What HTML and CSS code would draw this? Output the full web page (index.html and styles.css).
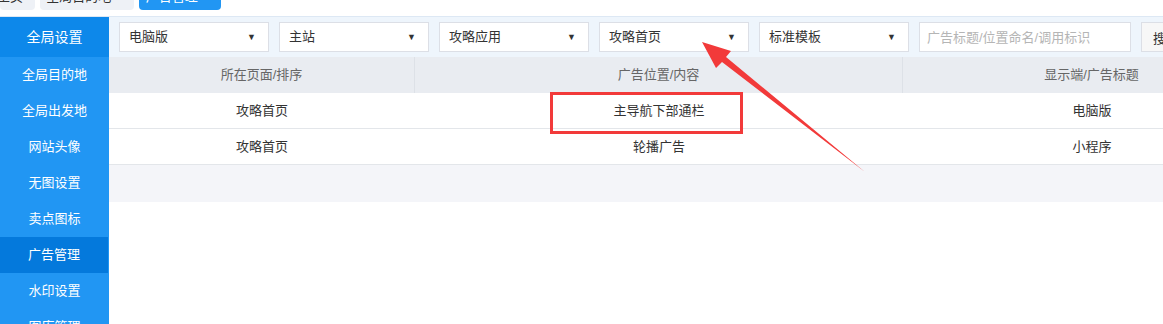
FILE: index.html
```html
<!DOCTYPE html>
<html lang="zh-CN">
<head>
    <meta charset="UTF-8">
    <title>广告管理</title>
    <link rel="stylesheet" href="styles.css">
</head>
<body>
    <!-- Tab strip -->
    <div class="tabs">
        <div class="tab home">主页</div>
        <div class="tab wide">全局目的地 <span class="close">×</span></div>
        <div class="tab active">广告管理 <span class="close">×</span></div>
    </div>

    <div class="layout">
        <!-- Sidebar -->
        <div class="sidebar">
            <div class="side-title">全局设置</div>
            <div class="side-item">全局目的地</div>
            <div class="side-item">全局出发地</div>
            <div class="side-item">网站头像</div>
            <div class="side-item">无图设置</div>
            <div class="side-item">卖点图标</div>
            <div class="side-item active">广告管理</div>
            <div class="side-item">水印设置</div>
            <div class="side-item">图库管理</div>
        </div>

        <!-- Main content -->
        <div class="main">
            <div class="toolbar">
                <div class="select">电脑版<span class="caret">▼</span></div>
                <div class="select">主站<span class="caret">▼</span></div>
                <div class="select">攻略应用<span class="caret">▼</span></div>
                <div class="select">攻略首页<span class="caret">▼</span></div>
                <div class="select">标准模板<span class="caret">▼</span></div>
                <input class="search" type="text" placeholder="广告标题/位置命名/调用标识">
                <button class="btn">搜索</button>
            </div>

            <div class="table">
                <div class="row head">
                    <div class="cell c1">所在页面/排序</div>
                    <div class="cell c2">广告位置/内容</div>
                    <div class="cell c3">显示端/广告标题</div>
                </div>
                <div class="row">
                    <div class="cell c1">攻略首页</div>
                    <div class="cell c2">主导航下部通栏</div>
                    <div class="cell c3">电脑版</div>
                </div>
                <div class="row">
                    <div class="cell c1">攻略首页</div>
                    <div class="cell c2">轮播广告</div>
                    <div class="cell c3">小程序</div>
                </div>
                <div class="table-foot"></div>
            </div>
        </div>
    </div>

    <!-- Annotation drawn over the screenshot -->
    <svg class="annotation" width="1163" height="324" viewBox="0 0 1163 324">
        <rect x="551.5" y="93.5" width="190" height="39" fill="none" stroke="#f23a3a" stroke-width="3"/>
        <polygon points="702,42 731,51 726,57 865,172 722,62 716,68" fill="#f23a3a"/>
    </svg>
</body>
</html>
```

FILE: styles.css
```css
body {
    margin: 0;
    font-family: "Liberation Sans", "Noto Sans CJK SC", sans-serif;
    font-size: 13px;
    color: #333;
    background: #fff;
    overflow: hidden;
}

/* Tab strip (scrolled so only the bottom of the tabs shows) */
.tabs {
    height: 17px;
    display: flex;
    align-items: flex-end;
    gap: 5px;
    padding-bottom: 6px;
    box-sizing: border-box;
    border-bottom: 1px solid #dde8f4;
    overflow: hidden;
}

.tab {
    flex-shrink: 0;
    height: 26px;
    line-height: 26px;
    text-align: center;
    background: #eef1f6;
    border-radius: 0 0 4px 4px;
    color: #333;
    white-space: nowrap;
    width: 82px;
}

.tab.home {
    width: 35px;
    text-align: left;
    text-indent: -3px;
}

.tab.wide {
    width: 94px;
}

.tab .close {
    color: #999;
    margin-left: 6px;
    font-size: 12px;
}

.tab.active {
    background: #2196f3;
    color: #fff;
}

.tab.active .close {
    color: #fff;
}

/* Layout */
.layout {
    display: flex;
    height: 307px;
}

.sidebar {
    width: 109px;
    flex-shrink: 0;
    background: #2196f3;
    color: #fff;
    overflow: hidden;
}

.side-title {
    height: 40px;
    line-height: 40px;
    text-align: center;
    font-size: 14px;
    background: #0d88ea;
}

.side-item {
    height: 36px;
    line-height: 36px;
    text-align: center;
    font-size: 13px;
}

.side-item.active {
    background: #0479dc;
    margin-right: 1px;
}

.main {
    flex: 1;
    overflow: hidden;
}

/* Filter bar */
.toolbar {
    height: 40px;
    box-sizing: border-box;
    padding: 5px 0 0 10px;
    background: #eef5fc;
    display: flex;
    gap: 10px;
    white-space: nowrap;
}

.select {
    flex-shrink: 0;
    width: 150px;
    height: 30px;
    box-sizing: border-box;
    border: 1px solid #dcdfe6;
    background: #fff;
    padding: 0 12px 0 9px;
    line-height: 28px;
    display: flex;
    justify-content: space-between;
}

.caret {
    font-size: 9px;
    color: #333;
}

.search {
    flex-shrink: 0;
    width: 212px;
    height: 30px;
    box-sizing: border-box;
    border: 1px solid #dcdfe6;
    padding: 0 7px;
    font-family: inherit;
    font-size: 13px;
    outline: none;
}

.search::placeholder {
    color: #b5b5b5;
}

.btn {
    flex-shrink: 0;
    height: 30px;
    padding: 0 11px;
    border: 1px solid #dcdfe6;
    background: #f7f7f7;
    font-family: inherit;
    font-size: 13px;
    color: #333;
}

/* Table */
.table {
    width: 1172px;
}

.row {
    display: flex;
    height: 36px;
    border-bottom: 1px solid #e3e6ea;
    box-sizing: border-box;
}

.row.head {
    background: #e9ecf1;
    color: #666;
    border-bottom: none;
}

.cell {
    line-height: 36px;
    text-align: center;
    box-sizing: border-box;
}

.head .cell {
    border-right: 1px solid #dde1e7;
}

.c1 {
    width: 306px;
}

.c2 {
    width: 488px;
}

.c3 {
    flex: 1;
}

.table-foot {
    height: 37px;
    background: #f4f5f9;
}

/* Annotation overlay */
.annotation {
    position: absolute;
    left: 0;
    top: 0;
    pointer-events: none;
}
```
